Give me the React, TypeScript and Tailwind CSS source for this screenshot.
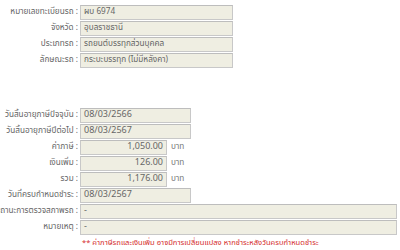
import React from "react";

const font = { fontFamily: 'Tahoma, "Noto Sans Thai", "Noto Sans", "DejaVu Sans", sans-serif' };

function Row({ label, children }: { label: string; children: React.ReactNode }) {
  return (
    <div className="flex items-center h-[16px]">
      <div className="w-[80px] shrink-0 whitespace-nowrap text-[8.2px] text-[#666] pr-[2px] flex justify-end">
        <span>{label} :</span>
      </div>
      {children}
    </div>
  );
}

function Box({ value, className, right, thai }: { value: string; className: string; right?: boolean; thai?: boolean }) {
  return (
    <div
      className={
        "h-[15px] border border-[#c8c8c8] border-t-[#bdbdbd] bg-[#efeee2] text-[#666] px-[3px] flex items-center whitespace-nowrap overflow-hidden " +
        (thai ? "text-[8.2px] " : "text-[9px] ") +
        (right ? "justify-end " : "") +
        className
      }
    >
      {value}
    </div>
  );
}

export default function App() {
  return (
    <div className="w-[400px] h-[250px] bg-white overflow-hidden pt-[4px]" style={font}>
      <div className="flex flex-col">
        <Row label="หมายเลขทะเบียนรถ"><Box value="ผบ 6974" thai className="w-[153px]" /></Row>
        <Row label="จังหวัด"><Box value="อุบลราชธานี" thai className="w-[153px]" /></Row>
        <Row label="ประเภทรถ"><Box value="รถยนต์บรรทุกส่วนบุคคล" thai className="w-[153px]" /></Row>
        <Row label="ลักษณะรถ"><Box value="กระบะบรรทุก (ไม่มีหลังคา)" thai className="w-[153px]" /></Row>
      </div>
      <div className="h-[39px]" />
      <div className="flex flex-col">
        <Row label="วันสิ้นอายุภาษีปัจจุบัน"><Box value="08/03/2566" className="w-[111px]" /></Row>
        <Row label="วันสิ้นอายุภาษีปีต่อไป"><Box value="08/03/2567" className="w-[111px]" /></Row>
        <Row label="ค่าภาษี">
          <Box value="1,050.00" right className="w-[87px]" />
          <span className="text-[8.2px] text-[#777] ml-[4px]">บาท</span>
        </Row>
        <Row label="เงินเพิ่ม">
          <Box value="126.00" right className="w-[87px]" />
          <span className="text-[8.2px] text-[#777] ml-[4px]">บาท</span>
        </Row>
        <Row label="รวม">
          <Box value="1,176.00" right className="w-[87px]" />
          <span className="text-[8.2px] text-[#777] ml-[4px]">บาท</span>
        </Row>
        <Row label="วันที่ครบกำหนดชำระ"><Box value="08/03/2567" className="w-[111px]" /></Row>
        <Row label="สถานะการตรวจสภาพรถ"><Box value="-" className="w-[317px]" /></Row>
        <Row label="หมายเหตุ"><Box value="-" className="w-[317px]" /></Row>
        <div className="pl-[82px] text-[7.6px] text-[#d42a2a] whitespace-nowrap leading-[16px]">
          ** ค่าภาษีรถและเงินเพิ่ม อาจมีการเปลี่ยนแปลง หากชำระหลังวันครบกำหนดชำระ
        </div>
      </div>
    </div>
  );
}
